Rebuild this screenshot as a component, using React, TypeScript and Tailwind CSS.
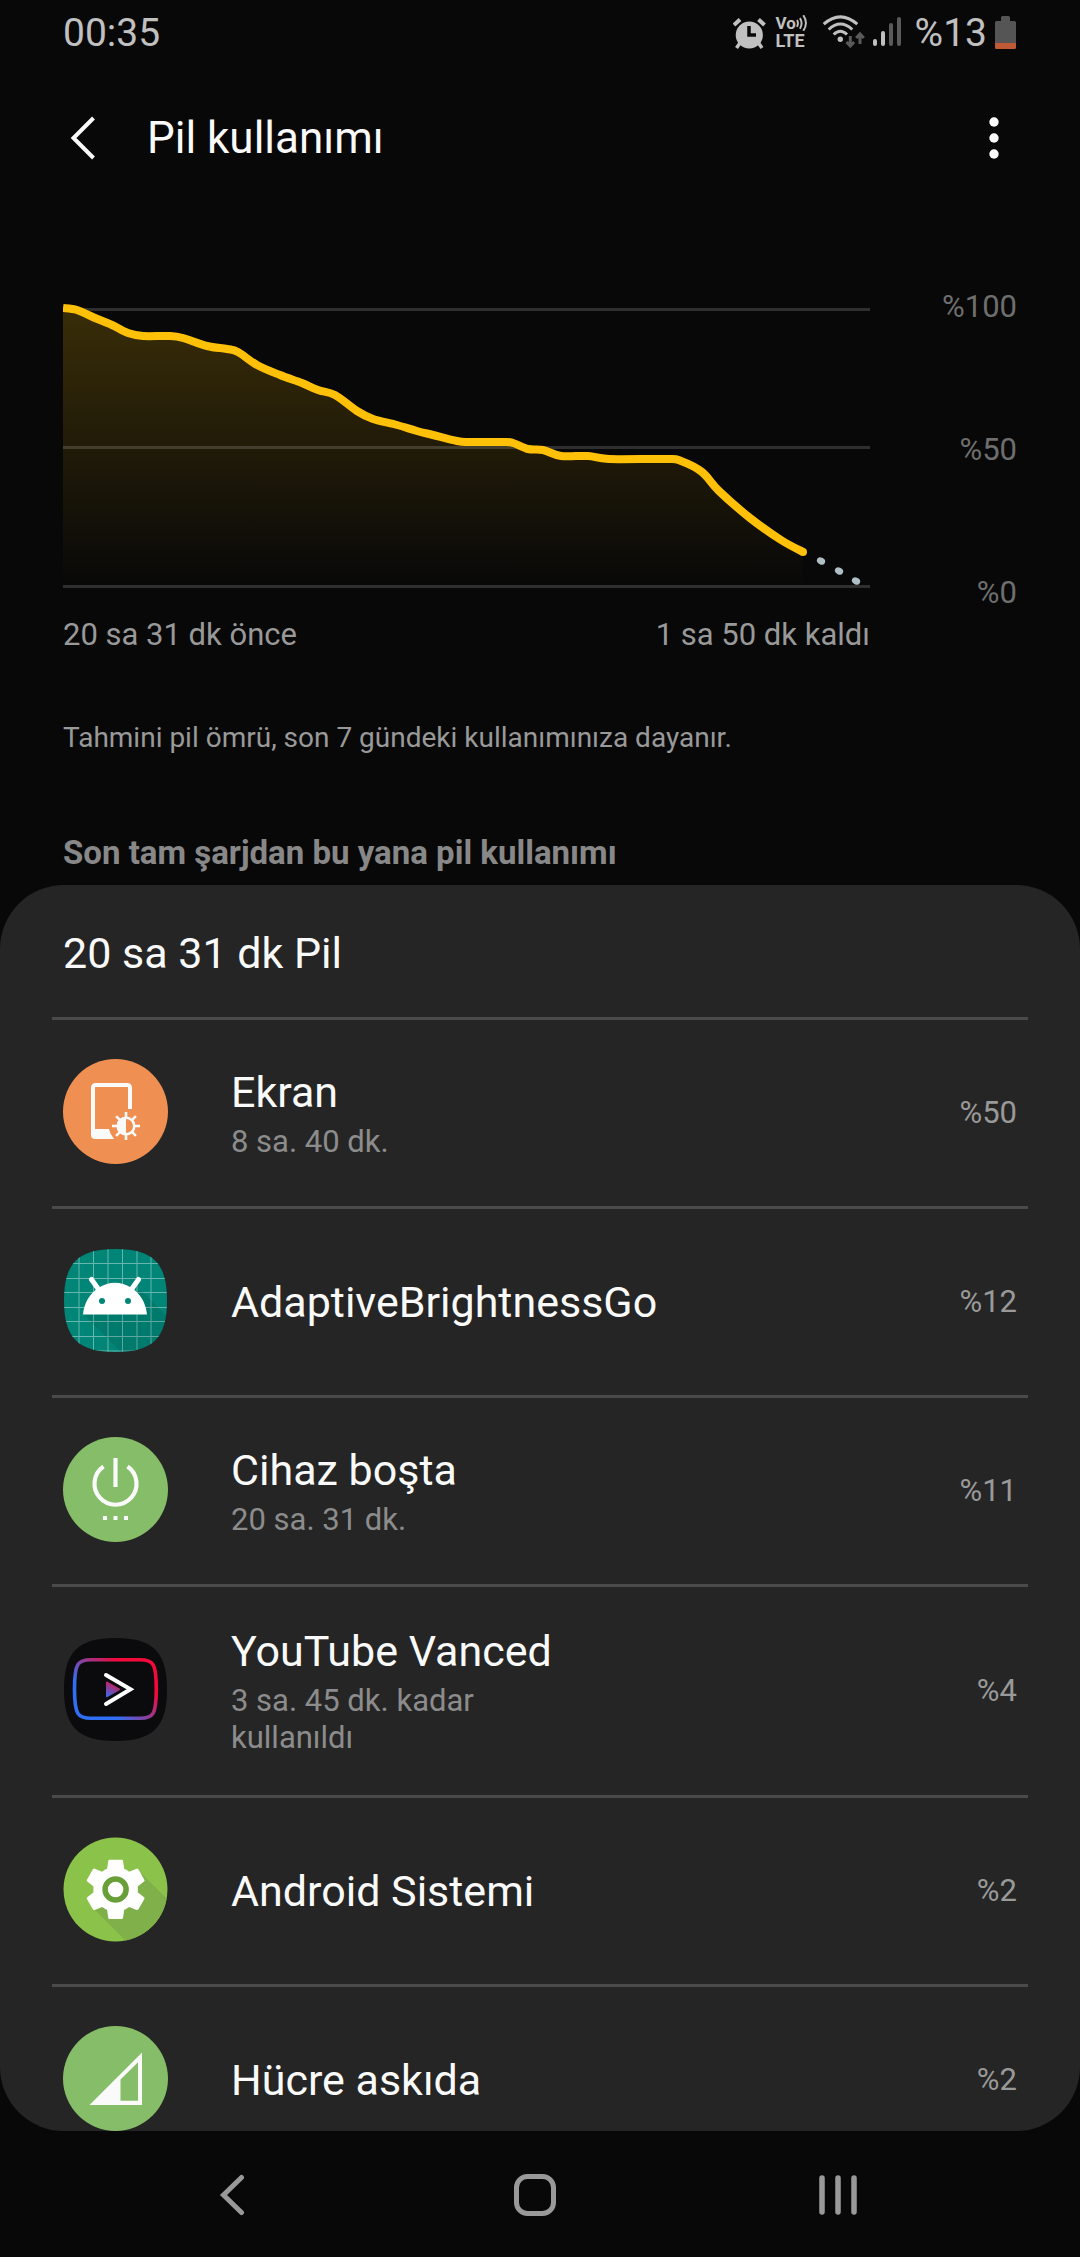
import type { ReactNode } from 'react'

type Point = [number, number]

interface Usage {
  name: string
  detail?: string
  percent: string
  icon: ReactNode
}

const SQUIRCLE = 'M52.5 1C90 1 104 15 104 52.5S90 104 52.5 104 1 90 1 52.5 15 1 52.5 1z'

const GEAR =
  'M19.43 12.98c.04-.32.07-.64.07-.98s-.03-.66-.07-.98l2.11-1.65c.19-.15.24-.42.12-.64l-2-3.46c-.12-.22-.39-.3-.61-.22l-2.49 1c-.52-.4-1.08-.73-1.69-.98l-.38-2.65C14.46 2.18 14.25 2 14 2h-4c-.25 0-.46.18-.49.42l-.38 2.65c-.61.25-1.17.59-1.69.98l-2.49-1c-.23-.09-.49 0-.61.22l-2 3.46c-.13.22-.07.49.12.64l2.11 1.65c-.04.32-.07.65-.07.98s.03.66.07.98l-2.11 1.65c-.19.15-.24.42-.12.64l2 3.46c.12.22.39.3.61.22l2.49-1c.52.4 1.08.73 1.69.98l.38 2.65c.03.24.24.42.49.42h4c.25 0 .46-.18.49-.42l.38-2.65c.61-.25 1.17-.59 1.69-.98l2.49 1c.23.09.49 0 .61-.22l2-3.46c.12-.22.07-.49-.12-.64l-2.11-1.65z'

const LEVELS: Point[] = [
  [0, 8], [14, 10], [32, 18], [49, 25], [65, 33], [80, 36], [107, 36], [120, 38], [144, 46],
  [164, 49], [175, 52], [194, 65], [217, 75], [239, 83], [255, 90], [272, 95], [294, 111],
  [310, 119], [334, 125], [354, 131], [370, 135], [394, 141], [407, 142], [440, 142], [450, 143],
  [465, 149], [480, 150], [498, 156], [525, 156], [546, 159], [604, 159], [618, 161], [639, 172],
  [656, 191], [687, 218], [718, 240], [740, 252],
]

const FORECAST: Point[] = [[758, 261], [776, 271], [793, 281]]

// Catmull-Rom spline through the points, as cubic beziers
function smoothPath(points: Point[]): string {
  let d = `M${points[0][0]} ${points[0][1]}`
  for (let i = 0; i < points.length - 1; i++) {
    const p0 = points[i - 1] ?? points[i]
    const p1 = points[i]
    const p2 = points[i + 1]
    const p3 = points[i + 2] ?? p2
    d += `C${p1[0] + (p2[0] - p0[0]) / 6} ${p1[1] + (p2[1] - p0[1]) / 6} ${p2[0] - (p3[0] - p1[0]) / 6} ${p2[1] - (p3[1] - p1[1]) / 6} ${p2[0]} ${p2[1]}`
  }
  return d
}

function AppIcon({ children }: { children: ReactNode }) {
  return (
    <svg viewBox="0 0 105 105" className="mb-[3px] size-[105px] shrink-0" aria-hidden="true">
      {children}
    </svg>
  )
}

function ScreenIcon() {
  return (
    <AppIcon>
      <circle cx="52.5" cy="52.5" r="52.5" fill="#ef9052" />
      <path d="M67 50V28.500a2.500 2.500 0 0 0-2.500-2.500H32.500a2.500 2.500 0 0 0-2.500 2.500V74" fill="none" stroke="#fafafa" strokeWidth="4" />
      <path d="M28 70h18l1.500 4.500L51 80H32a4 4 0 0 1-4-4z" fill="#fafafa" />
      <g stroke="#fafafa" strokeWidth="2.600">
        <path d="M63 53v6M63 75v6M49 67h6M71 67h6M53.100 57.100l4.500 4.500M68.400 72.400l4.500 4.500M53.100 76.900l4.500-4.500M68.400 61.600l4.500-4.500" />
        <circle cx="63" cy="67" r="8.300" fill="none" />
      </g>
      <path d="M63 58a9 9 0 0 0 0 18z" fill="#fafafa" />
    </AppIcon>
  )
}

function AndroidIcon() {
  return (
    <AppIcon>
      <clipPath id="android-clip">
        <path d={SQUIRCLE} />
      </clipPath>
      <g clipPath="url(#android-clip)">
        <rect width="105" height="105" fill="#008577" />
        <path
          d="M16 0v105M30.500 0v105M45 0v105M59.500 0v105M74 0v105M88 0v105M0 15.500h105M0 30.500h105M0 44.500h105M0 59.500h105M0 73.500h105M0 88.500h105M0 103h105"
          stroke="#66b6ad"
          strokeWidth="1"
        />
        <path d="M20 66L60 106h46V70L78 42z" fill="#000" opacity="0.080" />
      </g>
      <path d="M20 66.500C21 55 27 45 36 39.500C46 33 58 33 68 39.500C77 45 83 55 84 66.500z" fill="#fff" />
      <path d="M28.500 31.500L36 42M75.500 31.500L68 42" stroke="#fff" strokeWidth="5" strokeLinecap="round" />
      <circle cx="39" cy="53" r="3" fill="#008577" />
      <circle cx="65" cy="53" r="3" fill="#008577" />
    </AppIcon>
  )
}

function IdleIcon() {
  return (
    <AppIcon>
      <circle cx="52.5" cy="52.5" r="52.5" fill="#86bd68" />
      <path d="M52.500 21v29M40.500 29.500A21 21 0 1 0 64.500 29.500" fill="none" stroke="#fafafa" strokeWidth="4.200" />
      <path d="M40 79h4v4h-4zM50.500 79h4v4h-4zM61 79h4v4h-4z" fill="#fafafa" />
    </AppIcon>
  )
}

function VancedIcon() {
  return (
    <AppIcon>
      <linearGradient id="vanced-frame" gradientUnits="userSpaceOnUse" x1="28" y1="72" x2="70" y2="24">
        <stop offset="0.150" stopColor="#2f6ff5" />
        <stop offset="0.850" stopColor="#f3093a" />
      </linearGradient>
      <linearGradient id="vanced-play" gradientUnits="userSpaceOnUse" x1="43" y1="60" x2="50" y2="46">
        <stop offset="0" stopColor="#2f6ff5" />
        <stop offset="1" stopColor="#c81f5c" />
      </linearGradient>
      <path d={SQUIRCLE} fill="#0b0b0d" />
      <path
        d="M28 22.800H77C90 22.800 93.300 26 93.300 52S90 81.300 77 81.300H28C15 81.300 11.500 78 11.500 52S15 22.800 28 22.800z"
        fill="none"
        stroke="url(#vanced-frame)"
        strokeWidth="3.600"
      />
      <path d="M44 45.500L56 52.300L44 59.200z" fill="url(#vanced-play)" stroke="url(#vanced-play)" strokeWidth="2" strokeLinejoin="round" />
      <path d="M43 38L67.500 52.300L43 67" fill="none" stroke="#fff" strokeWidth="4" strokeLinecap="round" />
    </AppIcon>
  )
}

function SystemIcon() {
  return (
    <AppIcon>
      <clipPath id="system-clip">
        <circle cx="52.5" cy="52.5" r="52" />
      </clipPath>
      <g clipPath="url(#system-clip)">
        <rect width="105" height="105" fill="#8bc34a" />
        <path d="M30 71L64 105h41V63L79 37z" fill="#7fb049" />
      </g>
      <path d={GEAR} transform="translate(17 16.700) scale(2.970)" fill="#fff" />
      <circle cx="52.600" cy="52.400" r="10.500" fill="#fff" stroke="#689f38" strokeWidth="5.500" />
    </AppIcon>
  )
}

function CellIcon() {
  return (
    <AppIcon>
      <circle cx="52.5" cy="52.5" r="52.5" fill="#86bd68" />
      <path d="M26.500 79H79V26.500zM57.500 74.700V53.500L75 36.300v38.400z" fill="#fafafa" fillRule="evenodd" />
    </AppIcon>
  )
}

const USAGES: Usage[] = [
  { name: 'Ekran', detail: '8 sa. 40 dk.', percent: '%50', icon: <ScreenIcon /> },
  { name: 'AdaptiveBrightnessGo', percent: '%12', icon: <AndroidIcon /> },
  { name: 'Cihaz boşta', detail: '20 sa. 31 dk.', percent: '%11', icon: <IdleIcon /> },
  { name: 'YouTube Vanced', detail: '3 sa. 45 dk. kadar kullanıldı', percent: '%4', icon: <VancedIcon /> },
  { name: 'Android Sistemi', percent: '%2', icon: <SystemIcon /> },
  { name: 'Hücre askıda', percent: '%2', icon: <CellIcon /> },
]

function StatusBar() {
  return (
    <div className="flex h-[66px] shrink-0 items-center justify-between pr-16 pl-[63px] text-[39px] leading-[46px] text-[#c0c0c0]">
      <span>00:35</span>
      <div className="flex items-center">
        <svg width="33" height="33" viewBox="0 0 33 33" aria-hidden="true">
          <circle cx="16.300" cy="18" r="13.600" fill="#c0c0c0" />
          <path d="M1 8L7 2.500M25.500 2.500L31.500 8" stroke="#c0c0c0" strokeWidth="4" />
          <path d="M7 26L3.500 31M25.500 26L29 31" stroke="#c0c0c0" strokeWidth="3.500" />
          <path d="M16 9v9h7" fill="none" stroke="#080808" strokeWidth="3.500" />
        </svg>
        <div className="ml-2.5 flex w-8 flex-col pb-0.5 font-bold">
          <span className="flex items-center text-[17px] leading-[18px]">
            Vo
            <svg width="12" height="16" viewBox="0 0 12 16" fill="none" stroke="#c0c0c0" strokeWidth="2" aria-hidden="true">
              <path d="M1 5Q3 8 1 12M4 3Q7.500 8 4 14M7.500 0Q13 8 7.500 16" />
            </svg>
          </span>
          <span className="text-[18px] leading-[18px]">LTE</span>
        </div>
        <svg className="mb-1 ml-3.5" width="44" height="33" viewBox="0 0 44 33" fill="none" aria-hidden="true">
          <path d="M1.700 9.200Q18.300-5.500 35.300 9.200M6.700 14.500Q18.300 3.500 30.300 14.500M11.700 19.500Q18.300 13 25 19.500" stroke="#c0c0c0" strokeWidth="3" />
          <circle cx="18.300" cy="24.300" r="2.700" fill="#c0c0c0" />
          <path d="M28.300 21v10M24.500 27l3.800 4 3.800-4M38 29V19M34.200 23l3.800-4 3.800 4" stroke="#5a5a5a" strokeWidth="3" />
        </svg>
        <svg className="mb-1 ml-[7px]" width="28" height="32" viewBox="0 0 28 32" strokeWidth="4" strokeLinecap="round" aria-hidden="true">
          <path d="M2 26v3M10 18v11" stroke="#c0c0c0" />
          <path d="M18 10v19M26 4v25" stroke="#5a5a5a" />
        </svg>
        <span className="ml-3.5">%13</span>
        <svg className="mb-0.5 ml-2" width="21" height="33" viewBox="0 0 21 33" aria-hidden="true">
          <path d="M6 5V1.500Q6 0 7.500 0h6Q15 0 15 1.500V5h4.500Q21 5 21 6.500V27H0V6.500Q0 5 1.500 5z" fill="#555" />
          <path d="M0 27h21v4.500q0 1.500-1.500 1.500h-18Q0 33 0 31.500z" fill="#c05a35" />
        </svg>
      </div>
    </div>
  )
}

function Header() {
  return (
    <header className="flex h-36 shrink-0 items-center pr-16 pl-[62px]">
      <button type="button" aria-label="Geri" className="flex h-16 w-[42px] items-center justify-center">
        <svg width="26" height="44" viewBox="0 0 26 44" fill="none" stroke="#fafafa" strokeWidth="4" aria-hidden="true">
          <path d="M23.500 2L3.500 22L23.500 42" />
        </svg>
      </button>
      <h1 className="ml-[43px] flex-1 text-[44px] leading-[52px] text-[#fafafa]">Pil kullanımı</h1>
      <button type="button" aria-label="Diğer seçenekler" className="flex h-16 w-11 items-center justify-center">
        <svg width="10" height="42" viewBox="0 0 10 42" fill="#fafafa" aria-hidden="true">
          <circle cx="5" cy="5" r="4.700" />
          <circle cx="5" cy="21" r="4.700" />
          <circle cx="5" cy="37" r="4.700" />
        </svg>
      </button>
    </header>
  )
}

function BatteryChart() {
  const line = smoothPath(LEVELS)
  return (
    <section className="mt-[78px] flex px-[63px] text-[31px] leading-[37px]">
      <div className="min-w-0 flex-1 pt-3">
        <svg viewBox="0 0 807 288" className="block w-full" role="img" aria-label="Pil seviyesi">
          <linearGradient id="level-fill" x1="0" y1="0" x2="0" y2="1">
            <stop offset="0" stopColor="#ffc107" stopOpacity="0.200" />
            <stop offset="1" stopColor="#ffc107" stopOpacity="0" />
          </linearGradient>
          <path d={`${line}V286H0z`} fill="url(#level-fill)" />
          <path d="M0 9.500H807M0 147.500H807M0 286.500H807" stroke="#fff" strokeOpacity="0.160" strokeWidth="3" />
          <path d={line} fill="none" stroke="#ffc107" strokeWidth="8" />
          <circle cx="740" cy="252" r="4" fill="#ffc107" />
          {FORECAST.map(([x, y]) => (
            <ellipse key={x} cx={x} cy={y} rx="4.300" ry="3.400" transform={`rotate(30 ${x} ${y})`} fill="#b0bec5" />
          ))}
        </svg>
        <div className="mt-7 flex justify-between text-[#999]">
          <span>20 sa 31 dk önce</span>
          <span>1 sa 50 dk kaldı</span>
        </div>
      </div>
      <div className="flex h-[323px] w-[147px] flex-col items-end justify-between text-[#6e6e6e]">
        <span>%100</span>
        <span>%50</span>
        <span>%0</span>
      </div>
    </section>
  )
}

function UsageRow({ usage }: { usage: Usage }) {
  return (
    <li className="border-t-[3px] border-[#4a4a4a]">
      <button type="button" className="flex w-full items-center px-[11px] py-[39px] text-left">
        {usage.icon}
        <span className="ml-[63px] flex min-w-0 flex-1 flex-col gap-1.5">
          <span className="text-[43px] leading-[50px] text-[#fafafa]">{usage.name}</span>
          {usage.detail && (
            <span className="max-w-[320px] text-[31px] leading-[37px] text-[#8c8c8c]">{usage.detail}</span>
          )}
        </span>
        <span className="mb-0.5 text-[31px] leading-[37px] text-[#999]">{usage.percent}</span>
      </button>
    </li>
  )
}

function NavBar() {
  return (
    <nav className="grid h-[126px] shrink-0 grid-cols-3 place-items-center pt-0.5 pr-[90px] pl-20">
      <button type="button" aria-label="Geri">
        <svg width="26" height="42" viewBox="0 0 26 42" fill="none" stroke="#999" strokeWidth="5" strokeLinecap="round" aria-hidden="true">
          <path d="M22.500 3.500L4.500 21L22.500 38.500" />
        </svg>
      </button>
      <button type="button" aria-label="Ana ekran">
        <svg width="42" height="42" viewBox="0 0 42 42" fill="none" stroke="#999" strokeWidth="5" aria-hidden="true">
          <rect x="2.500" y="2.500" width="37" height="37" rx="11" />
        </svg>
      </button>
      <button type="button" aria-label="Son uygulamalar">
        <svg width="38" height="42" viewBox="0 0 38 42" stroke="#999" strokeWidth="5.500" strokeLinecap="round" aria-hidden="true">
          <path d="M3 4v34M19 4v34M35 4v34" />
        </svg>
      </button>
    </nav>
  )
}

export default function App() {
  return (
    <div className="flex h-screen flex-col bg-[#080808] font-[Roboto,sans-serif]">
      <StatusBar />
      <Header />
      <main className="flex min-h-0 flex-1 flex-col">
        <BatteryChart />
        <p className="mt-[68px] px-[63px] text-[28px] leading-[33px] text-[#999]">
          Tahmini pil ömrü, son 7 gündeki kullanımınıza dayanır.
        </p>
        <h2 className="mt-20 px-[63px] text-[33px] leading-[37px] font-bold text-[#888]">
          Son tam şarjdan bu yana pil kullanımı
        </h2>
        <section className="mt-3.5 min-h-0 flex-1 overflow-y-auto rounded-[64px] bg-[#252525] px-[52px] [scrollbar-width:none]">
          <h3 className="px-[11px] pt-[43px] pb-[39px] text-[43px] leading-[50px] text-[#fafafa]">20 sa 31 dk Pil</h3>
          <ul>
            {USAGES.map(usage => (
              <UsageRow key={usage.name} usage={usage} />
            ))}
          </ul>
        </section>
      </main>
      <NavBar />
    </div>
  )
}
